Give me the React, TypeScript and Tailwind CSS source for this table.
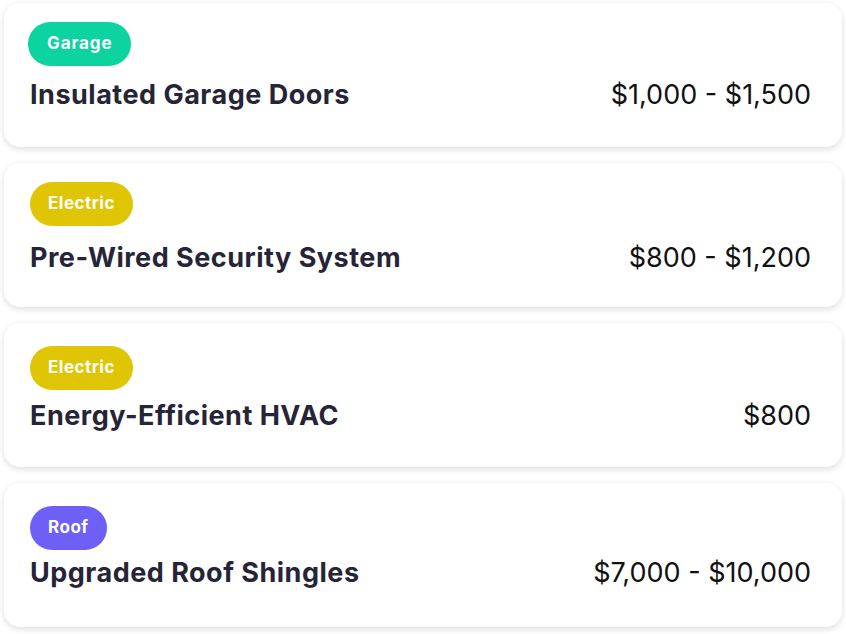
type Item = {
  tag: string;
  badge: string;
  title: string;
  price: string;
  card: string;
  row: string;
};

const items: Item[] = [
  {
    tag: "Garage",
    badge: "bg-[#0dd3a0] ml-0 px-[19px] tracking-[0.9px]",
    title: "Insulated Garage Doors",
    price: "$1,000 - $1,500",
    card: "pt-[19px] pb-[36px]",
    row: "mt-[13px]",
  },
  {
    tag: "Electric",
    badge: "bg-[#e0c505] ml-[2px] px-[18px] tracking-[0.5px]",
    title: "Pre-Wired Security System",
    price: "$800 - $1,200",
    card: "pt-[19px] pb-[33px]",
    row: "mt-[16px]",
  },
  {
    tag: "Electric",
    badge: "bg-[#e0c505] ml-[2px] px-[18px] tracking-[0.5px]",
    title: "Energy-Efficient HVAC",
    price: "$800",
    card: "pt-[23px] pb-[35px]",
    row: "mt-[10px]",
  },
  {
    tag: "Roof",
    badge: "bg-[#6e5ff7] ml-[2px] px-[18px] tracking-[0.5px]",
    title: "Upgraded Roof Shingles",
    price: "$7,000 - $10,000",
    card: "pt-[23px] pb-[38px]",
    row: "mt-[7px]",
  },
];

export default function App() {
  return (
    <div
      className="min-h-screen bg-white px-1 pt-[3px] flex flex-col gap-4"
      style={{ fontFamily: "Inter, 'Noto Sans', sans-serif" }}
    >
      {items.map((it, i) => (
        <div
          key={i}
          className={`bg-white rounded-2xl shadow-[0_2px_6px_rgba(0,0,0,0.14)] pl-6 pr-[31px] flex flex-col items-start ${it.card}`}
        >
          <span
            className={`${it.badge} h-11 rounded-full flex items-center text-white text-[17px] font-bold`}
          >
            {it.tag}
          </span>
          <div className={`w-full flex items-baseline justify-between ${it.row}`}>
            <span className="pl-[2px] text-[27px] leading-8 font-bold tracking-[0.5px] text-[#262538]">
              {it.title}
            </span>
            <span className="text-[27px] leading-8 font-normal text-[#111111]">{it.price}</span>
          </div>
        </div>
      ))}
    </div>
  );
}
